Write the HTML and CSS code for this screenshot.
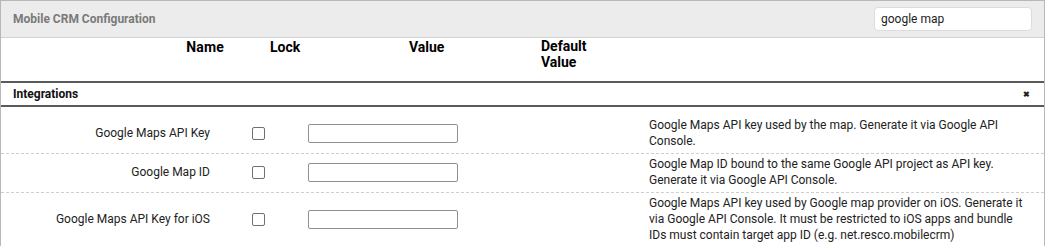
FILE: index.html
```html
<!DOCTYPE html>
<html>
    <head>
        <meta charset="utf-8">
        <title>Mobile CRM Configuration</title>
        <link rel="stylesheet" href="styles.css">
    </head>
    <body>
        <div class="panel">
            <div class="panel-head">
                <span class="panel-title">Mobile CRM Configuration</span>
                <input class="search" type="text" value="google map">
            </div>

            <div class="grid col-heads">
                <div class="h-name">Name</div>
                <div class="h-lock">Lock</div>
                <div class="h-value">Value</div>
                <div class="h-default">Default<br>Value</div>
                <div></div>
            </div>

            <div class="section">
                <span>Integrations</span>
                <span class="close">&#x2716;</span>
            </div>

            <div class="grid row first">
                <div class="label">Google Maps API Key</div>
                <div class="lock"><span class="check"></span></div>
                <div class="value"><input type="text"></div>
                <div></div>
                <div class="desc">Google Maps API key used by the map. Generate it via Google API Console.</div>
            </div>
            <div class="grid row">
                <div class="label">Google Map ID</div>
                <div class="lock"><span class="check"></span></div>
                <div class="value"><input type="text"></div>
                <div></div>
                <div class="desc">Google Map ID bound to the same Google API project as API key. Generate it via Google API Console.</div>
            </div>
            <div class="grid row">
                <div class="label">Google Maps API Key for iOS</div>
                <div class="lock"><span class="check"></span></div>
                <div class="value"><input type="text"></div>
                <div></div>
                <div class="desc">Google Maps API key used by Google map provider on iOS. Generate it via Google API Console. It must be restricted to iOS apps and bundle IDs must contain target app ID (e.g. net.resco.mobilecrm)</div>
            </div>
        </div>
    </body>
</html>
```

FILE: styles.css
```css
* {
    box-sizing: border-box;
}

body {
    margin: 0;
    font-family: Roboto, "Liberation Sans", Arial, sans-serif;
    font-size: 12px;
    color: #222;
    background: #fff;
}

.panel {
    width: 1045px;
    height: 246px;
    border: 1px solid #b8b8b8;
    border-bottom: none;
    overflow: hidden;
}

.panel-head {
    display: flex;
    align-items: center;
    justify-content: space-between;
    height: 37px;
    padding: 0 12px 0 12px;
    background: #ececec;
    border-bottom: 1px solid #d2d2d2;
}

.panel-title {
    font-weight: bold;
    color: #7a7a7a;
    font-size: 12px;
}

.search {
    width: 158px;
    height: 24px;
    margin-top: -1px;
    border: 1px solid #dcdcdc;
    border-radius: 4px;
    padding: 0 6px;
    font-family: Roboto, "Liberation Sans", Arial, sans-serif;
    font-size: 12px;
    color: #222;
    background: #fff;
}

.grid {
    display: grid;
    grid-template-columns: 230px 60px 240px 110px 1fr;
}

.col-heads {
    height: 43px;
    padding-top: 1px;
    font-size: 14px;
    font-weight: bold;
    color: #000;
    line-height: 16px;
}

.h-name {
    text-align: right;
    padding-right: 7px;
    letter-spacing: 0.2px;
}

.h-lock {
    padding-left: 39px;
    white-space: nowrap;
}

.h-value {
    padding-left: 118px;
}

.h-default {
    padding-left: 10px;
    line-height: 16px;
    margin-top: -1px;
}

.section {
    display: flex;
    justify-content: space-between;
    align-items: center;
    height: 26px;
    padding: 0 14px 0 12px;
    border-top: 2px solid #5a5a5a;
    border-bottom: 2px solid #5a5a5a;
    font-weight: bold;
    color: #111;
}

.close {
    font-size: 8px;
    color: #222;
}

.row {
    border-bottom: 1px dashed #cfcfcf;
    padding: 2px 0 4px;
    align-items: center;
    line-height: 16px;
}

.row.first {
    padding-top: 10px;
    padding-bottom: 4px;
}

.label {
    text-align: right;
    padding-right: 21px;
    color: #222;
}

.lock {
    padding-left: 21px;
    display: flex;
}

.check {
    display: inline-block;
    width: 13px;
    height: 13px;
    border: 1px solid #6f6f7a;
    border-radius: 2px;
    background: #fff;
}

.value {
    padding-left: 17px;
    display: flex;
}

.value input {
    width: 150px;
    height: 19px;
    border: 1px solid #8f8f99;
    border-radius: 2px;
    background: #fff;
    padding: 0;
}

.desc {
    padding-left: 8px;
    padding-right: 19px;
    color: #222;
}
```
